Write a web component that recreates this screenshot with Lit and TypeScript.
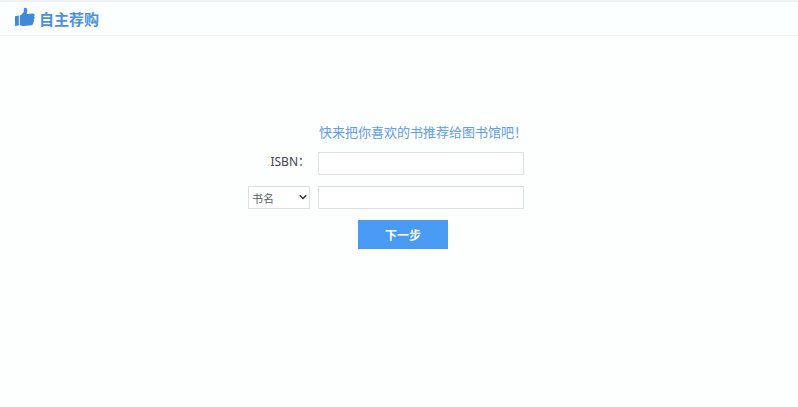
import { LitElement, html, css } from "lit";
import { customElement, state } from "lit/decorators.js";

@customElement("app-root")
export class AppRoot extends LitElement {
  static styles = css`
    :host {
      display: flex;
      flex-direction: column;
      min-height: 100vh;
      box-sizing: border-box;
      border-top: 2px solid #eef2f4;
      background: #fdfefe;
      color: #3d4352;
      font-family: "Noto Sans", "Noto Sans CJK SC", sans-serif;
      font-size: 12px;
    }
    .header {
      display: flex;
      align-items: center;
      gap: 4px;
      height: 33px;
      padding: 0 14px;
      background: #fcffff;
      border-bottom: 1px solid #f0f3f6;
    }
    .thumb {
      width: 21px;
      height: 20px;
      fill: #3f8ad8;
      margin-bottom: 4px;
    }
    .title {
      margin: 0;
      font: 700 15px/20px "Noto Sans CJK SC", sans-serif;
      color: #4a90dc;
    }
    .main {
      display: flex;
      justify-content: center;
      padding-top: 86px;
    }
    .form {
      display: grid;
      grid-template-columns: 62px 206px;
      column-gap: 8px;
      row-gap: 11px;
      align-items: center;
      padding-right: 26px;
    }
    .slogan {
      grid-column: 2;
      margin: 0;
      padding-left: 1px;
      font: 400 13px/19px "Noto Sans CJK SC", sans-serif;
      color: #619ce8;
      white-space: nowrap;
    }
    .label {
      justify-self: end;
      line-height: 18px;
      padding-bottom: 4px;
      white-space: nowrap;
    }
    .field {
      width: 100%;
      height: 23px;
      box-sizing: border-box;
      border: 1px solid #dcdfe6;
      border-radius: 0;
      background: #fff;
      padding: 0 6px;
      color: inherit;
      font: inherit;
      outline: none;
    }
    .picker {
      display: grid;
      align-items: center;
    }
    .picker > * {
      grid-area: 1 / 1;
    }
    .select {
      width: 100%;
      height: 23px;
      box-sizing: border-box;
      appearance: none;
      border: 1px solid #dcdfe6;
      border-radius: 0;
      background: #fff;
      padding: 0 16px 0 3px;
      color: #555a66;
      font: 400 11px/20px "Noto Sans CJK SC", sans-serif;
    }
    .chevron {
      justify-self: end;
      width: 8px;
      height: 6px;
      margin: 0 3px 2px 0;
      fill: none;
      stroke: #2b2f38;
      stroke-width: 1.4;
      pointer-events: none;
    }
    .next {
      grid-column: 2;
      width: 90px;
      height: 29px;
      margin-left: 40px;
      padding: 0;
      border: 0;
      background: #489af2;
      color: #fff;
      font: 700 12px/20px "Noto Sans CJK SC", sans-serif;
      cursor: pointer;
    }
  `;

  @state() private kind = "title";

  private pick(e: Event) {
    this.kind = (e.target as HTMLSelectElement).value;
  }

  render() {
    return html`
      <header class="header">
        <svg class="thumb" viewBox="0 0 21 20" aria-hidden="true">
          <path d="M1 9.2 4.8 8.6V18.4L1 18.9z" />
          <path
            d="M5.8 8.6C8 7.6 9.6 5.8 9.9 3.8L9.8 1.4C10.6.3 12.8.7 13.2 2.6C13.5 4.3 13 5.8 12.6 7.1L19 6.6C21 6.6 21 8.9 20 9.4C21.2 10.2 20.6 12 19.8 12.4C20.6 13.3 20 15 19 15.4C19.5 16.9 18.8 18 17.2 18.3L10 19C8.4 19 7 18.5 5.8 18.2Z"
          />
        </svg>
        <h1 class="title">自主荐购</h1>
      </header>
      <main class="main">
        <form class="form" @submit=${(e: Event) => e.preventDefault()}>
          <p class="slogan">快来把你喜欢的书推荐给图书馆吧！</p>
          <label class="label" for="isbn">ISBN：</label>
          <input class="field" id="isbn" type="text" />
          <div class="picker">
            <select class="select" aria-label="检索字段" .value=${this.kind} @change=${this.pick}>
              <option value="title">书名</option>
            </select>
            <svg class="chevron" viewBox="0 0 8 6" aria-hidden="true">
              <path d="M.7 1.2 4 4.5 7.3 1.2" />
            </svg>
          </div>
          <input class="field" type="text" aria-label="书名" />
          <button class="next" type="submit">下一步</button>
        </form>
      </main>
    `;
  }
}
